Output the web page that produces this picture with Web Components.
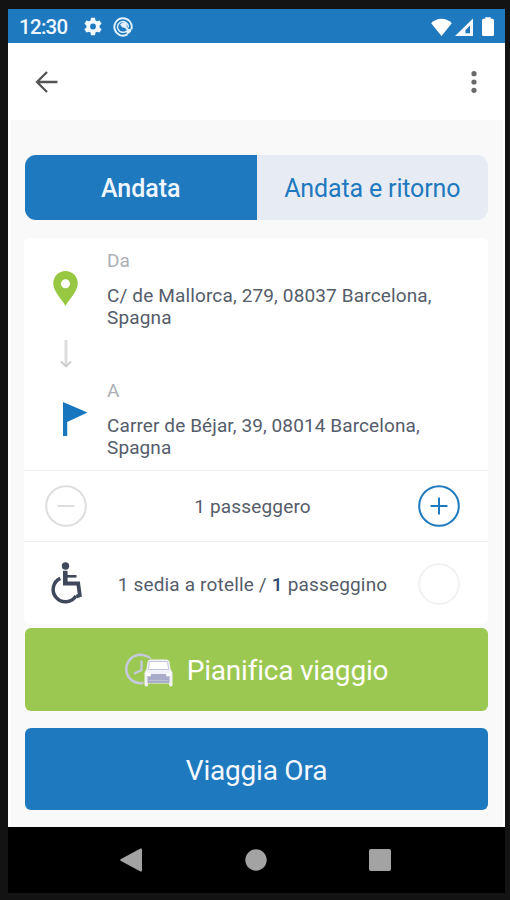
<!DOCTYPE html>
<html lang="it">
<head>
  <meta charset="UTF-8">
  <title>Pianifica viaggio</title>
  <style>
    :root {
      --blue: #1f79bf;
      --green: #9bc850;
      --text: #555c6a;
      --muted: #adafb6;
      --line: #f1f1f3;
    }

    body {
      margin: 0;
      font-family: Roboto, "Liberation Sans", sans-serif;
      color: var(--text);
    }
  </style>
</head>
<body>
  <phone-frame>
    <status-bar slot="status" time="12:30"></status-bar>
    <app-bar slot="header"></app-bar>

    <trip-tabs data-tabs='["Andata", "Andata e ritorno"]'></trip-tabs>

    <trip-card>
      <trip-stop icon="pin" label="Da">C/ de Mallorca, 279, 08037 Barcelona,<br>Spagna</trip-stop>
      <ui-icon name="down" class="arrow"></ui-icon>
      <trip-stop icon="flag" label="A" class="to">Carrer de Béjar, 39, 08014 Barcelona,<br>Spagna</trip-stop>
      <option-row class="passengers">
        <ui-icon slot="start" name="minus"></ui-icon>
        1 passeggero
        <ui-icon slot="end" name="plus"></ui-icon>
      </option-row>
      <option-row class="wheelchair">
        <ui-icon slot="start" name="wheelchair"></ui-icon>
        1 sedia a rotelle / <b>1</b> passeggino
        <ui-icon slot="end" name="circle"></ui-icon>
      </option-row>
    </trip-card>

    <action-button class="plan"><ui-icon slot="icon" name="schedule"></ui-icon>Pianifica viaggio</action-button>
    <action-button class="now">Viaggia Ora</action-button>

    <nav-bar slot="nav"></nav-bar>
  </phone-frame>

  <script>
    const ICONS = {
      gear: [20, 20, `<path fill="#f2f8ff" fill-rule="evenodd" d="M8 .8h4l.5 2.6 1.6.9 2.500-.9 2 3.400-2 1.800v1.800l2 1.800-2 3.400-2.500-.9-1.600.9-.5 2.600H8l-.5-2.600-1.600-.9-2.500.9-2-3.400 2-1.800V8.600l-2-1.800 2-3.400 2.500.9 1.600-.9zM10 6.600a2.900 2.900 0 1 0 0 5.800 2.900 2.900 0 0 0 0-5.800z"/>`],
      badge: [20, 20, `<g fill="none" stroke="#e4f2ff"><path stroke-width="1.900" d="M14.500 17.400A8.700 8.700 0 1 1 18.500 12"/><path stroke-width="1.500" d="M13.500 14A5.400 5.400 0 1 1 15.300 10.500"/><path stroke-width="2" d="M7.500 8l2.500-1 7 8"/></g><circle cx="11" cy="8" r="2.800" fill="#e4f2ff"/><path d="M12.500 14l6.500-3q-.5 4.500-4.500 6.500z" fill="#e4f2ff"/>`],
      wifi: [21, 18, `<path fill="#fff" d="M.2 5.200C5.500-.8 15.500-.8 20.800 5.200L10.500 18z"/>`],
      signal: [18, 18, `<path fill="#f4f9ff" fill-rule="evenodd" d="M0 18L18 .5V18zM15 7.500L10.500 12V15.200H15z"/>`],
      battery: [12, 19, `<path fill="#fff" d="M3.300 1.800V.3h5.400v1.500H10.500Q12 1.800 12 3.400V17.400Q12 19 10.500 19H1.500Q0 19 0 17.400V3.400Q0 1.800 1.500 1.800z"/>`],
      back: [23, 22, `<path fill="none" stroke="#555" stroke-width="2.300" d="M22.500 11H2M12 1L2 11l10 10"/>`],
      more: [6, 22, `<g fill="#6a6a6a"><circle cx="3" cy="2.700" r="2.600"/><circle cx="3" cy="11" r="2.600"/><circle cx="3" cy="19.300" r="2.600"/></g>`],
      pin: [25, 35, `<path fill="#98c841" fill-rule="evenodd" d="M12.500 0A12.200 12.200 0 0 0 .3 12.200C.3 20.500 8 27 12.500 35 17 27 24.700 20.500 24.700 12.200A12.200 12.200 0 0 0 12.500 0zM12.500 8.200a4.500 4.500 0 1 1 0 9 4.500 4.500 0 0 1 0-9z"/>`],
      down: [12, 28, `<path fill="none" stroke="#dcdcdd" stroke-width="3" d="M6 0V26"/><path fill="none" stroke="#cbcbcc" stroke-width="1.800" d="M1 21.500l5 5 5-5"/>`],
      flag: [44, 34, `<path fill="#1876bf" d="M19 0L43.500 10.500 23.200 20V34H19z"/>`],
      minus: [42, 42, `<g fill="none" stroke="#dedede" stroke-width="2"><circle cx="21" cy="21" r="19.800"/><path d="M12.500 21h17"/></g>`],
      plus: [42, 42, `<g fill="none" stroke="#1f7abe" stroke-width="2"><circle cx="21" cy="21" r="19.800"/><path d="M12.500 21h17M21 12.500v17"/></g>`],
      circle: [42, 42, `<circle cx="21" cy="21" r="19.900" fill="none" stroke="#eff0f2" stroke-width="1.800"/>`],
      wheelchair: [32, 43, `<g fill="none" stroke="#40495c"><path stroke-width="3.500" d="M10.300 16.300A12.300 12.300 0 1 0 26 33.800"/><path stroke-width="4.600" d="M15.300 8.800V21.500"/><path stroke-width="2.600" d="M16 14.300H26.500"/><path stroke-width="3.800" d="M13 21.500H28.200L29.800 33.300 26.500 34.500"/></g><circle cx="15.500" cy="4" r="3.700" fill="#40495c"/>`],
      schedule: [48, 36, `<g fill="none" stroke="#c4c9dc"><circle cx="15.500" cy="17" r="14.200" stroke-width="2.600"/><path stroke-width="2.400" d="M16.500 8.500V18L9 21.800"/></g>
        <path fill="#9bc850" d="M19.500 11L23 6.500H46V35H18.500V21z"/>
        <path fill="#f1f1fa" d="M22.500 10Q23 7.500 25.500 7.500H41.500Q44 7.500 44.500 10L45.500 17 47.500 20.500V33Q47.500 34.500 46 34.500T44 33V31.500H23V33Q23 34.500 21.500 34.500T19.500 33V20.500L21.500 17z"/>
        <path fill="#fff" stroke="#c6c7dc" stroke-width="1" d="M24.500 9.500H42.500L43.700 17.500H23.300z"/>
        <path fill="#a9acc8" d="M22.500 22H44.500V31H22.500z"/>
        <path fill="#fff" d="M21 20.500l4.500.7q1.500 3-1.200 3.200L21 23.500zM46 20.500l-4.500.7q-1.500 3 1.200 3.200L46 23.500z"/>
        <path stroke="#bdbfd4" d="M23.500 28.500H43.500"/>`],
      navBack: [22, 24, `<path fill="#a3a3a3" d="M20.500.5Q22 0 22 1.500V22.500Q22 24 20.500 23.400L1 13Q-.5 12 1 11z"/>`],
      navHome: [22, 22, `<circle cx="11" cy="11" r="10.700" fill="#a3a3a3"/>`],
      navRecent: [22, 22, `<rect width="22" height="22" rx="2" fill="#a3a3a3"/>`]
    };

    class UiIcon extends HTMLElement {
      connectedCallback() {
        const [w, h, body] = ICONS[this.getAttribute('name')];
        this.attachShadow({ mode: 'open' }).innerHTML = /*html*/ `
          <style>
            :host { display: block; flex: none; }
            svg { display: block; margin: 0 auto; }
          </style>
          <svg width="${w}" height="${h}" viewBox="0 0 ${w} ${h}">${body}</svg>
        `;
      }
    }

    class PhoneFrame extends HTMLElement {
      constructor() {
        super();
        this.attachShadow({ mode: 'open' }).innerHTML = /*html*/ `
          <style>
            :host {
              display: flex;
              flex-direction: column;
              box-sizing: border-box;
              width: 510px;
              height: 900px;
              padding: 9px 5px 7px 8px;
              background: #141313;
            }
            .screen {
              flex: 1;
              display: flex;
              flex-direction: column;
              background: #fff;
            }
            main {
              flex: 1;
              margin: 0 2px 0 3px;
              padding: 35px 15px 0 14px;
              background: #f9f9fa;
            }
          </style>
          <div class="screen">
            <slot name="status"></slot>
            <slot name="header"></slot>
            <main><slot></slot></main>
          </div>
          <slot name="nav"></slot>
        `;
      }
    }

    class StatusBar extends HTMLElement {
      connectedCallback() {
        this.attachShadow({ mode: 'open' }).innerHTML = /*html*/ `
          <style>
            :host {
              display: flex;
              align-items: center;
              box-sizing: border-box;
              height: 34px;
              padding: 1px 11px 0 11px;
              background: var(--blue);
              color: #eef6ff;
            }
            .time { width: 64px; font-size: 20.5px; font-weight: 500; letter-spacing: -.7px; }
            .left, .right { display: flex; align-items: center; }
            .left { gap: 10px; }
            .right { margin-left: auto; gap: 3px; }
            .right :last-child { margin-left: 6px; }
          </style>
          <span class="time">${this.getAttribute('time')}</span>
          <div class="left">
            <ui-icon name="gear"></ui-icon>
            <ui-icon name="badge"></ui-icon>
          </div>
          <div class="right">
            <ui-icon name="wifi"></ui-icon>
            <ui-icon name="signal"></ui-icon>
            <ui-icon name="battery"></ui-icon>
          </div>
        `;
      }
    }

    class AppBar extends HTMLElement {
      constructor() {
        super();
        this.attachShadow({ mode: 'open' }).innerHTML = /*html*/ `
          <style>
            :host {
              display: flex;
              justify-content: space-between;
              align-items: center;
              height: 77px;
              padding: 0 28px 0 27px;
              background: #fff;
            }
          </style>
          <ui-icon name="back"></ui-icon>
          <ui-icon name="more"></ui-icon>
        `;
      }
    }

    class TripTabs extends HTMLElement {
      connectedCallback() {
        const tabs = JSON.parse(this.dataset.tabs || '[]');
        this.attachShadow({ mode: 'open' }).innerHTML = /*html*/ `
          <style>
            :host {
              display: grid;
              grid-template-columns: 1fr 1fr;
              height: 65px;
              border-radius: 11px;
              overflow: hidden;
              background: #e7ecf4;
              font-size: 25px;
            }
            div {
              display: flex;
              align-items: center;
              justify-content: center;
              padding-top: 2px;
              color: var(--blue);
              letter-spacing: -.15px;
            }
            .active {
              background: var(--blue);
              color: #eef6ff;
              font-weight: 500;
              letter-spacing: 0;
            }
          </style>
          ${tabs.map((tab, i) => `<div class="${i === 0 ? 'active' : ''}">${tab}</div>`).join('')}
        `;
      }
    }

    class TripCard extends HTMLElement {
      constructor() {
        super();
        this.attachShadow({ mode: 'open' }).innerHTML = /*html*/ `
          <style>
            :host {
              display: block;
              margin: 18px 0 4px -1px;
              padding-top: 12px;
              height: 374px;
              border-radius: 6px;
              background: #fff;
            }
            ::slotted(.arrow) { width: 84px; height: 40px; padding-top: 11px; }
            ::slotted(.passengers) { margin-top: 11px; height: 70px; }
            ::slotted(.wheelchair) { height: 83px; }
          </style>
          <slot></slot>
        `;
      }
    }

    class TripStop extends HTMLElement {
      connectedCallback() {
        this.attachShadow({ mode: 'open' }).innerHTML = /*html*/ `
          <style>
            :host {
              display: grid;
              grid-template-columns: 83px 1fr;
              align-items: center;
              font-size: 19px;
              line-height: 22px;
              letter-spacing: .14px;
            }
            :host(.to) { letter-spacing: .1px; }
            ui-icon { padding-bottom: 2px; }
            .label { margin-bottom: 13px; color: var(--muted); }
            .address { white-space: nowrap; }
          </style>
          <ui-icon name="${this.getAttribute('icon')}"></ui-icon>
          <div>
            <div class="label">${this.getAttribute('label')}</div>
            <div class="address"><slot></slot></div>
          </div>
        `;
      }
    }

    class OptionRow extends HTMLElement {
      constructor() {
        super();
        this.attachShadow({ mode: 'open' }).innerHTML = /*html*/ `
          <style>
            :host {
              display: grid;
              grid-template-columns: 84px 1fr 98px;
              align-items: center;
              border-top: 1px solid var(--line);
              font-size: 19px;
              letter-spacing: .17px;
            }
            .text { text-align: center; white-space: nowrap; padding: 1px 0 0 7px; }
            ::slotted(b) { font-weight: 500; color: #2c4a70; }
          </style>
          <slot name="start"></slot>
          <div class="text"><slot></slot></div>
          <slot name="end"></slot>
        `;
      }
    }

    class ActionButton extends HTMLElement {
      constructor() {
        super();
        this.attachShadow({ mode: 'open' }).innerHTML = /*html*/ `
          <style>
            :host {
              display: flex;
              align-items: center;
              justify-content: center;
              gap: 14px;
              height: 82px;
              border-radius: 6px;
              background: var(--blue);
              color: #f3f8ff;
              font-size: 28px;
              letter-spacing: -.22px;
            }
            :host(.plan) {
              height: 83px;
              margin-bottom: 17px;
              background: var(--green);
              color: #fff;
            }
            span { padding-top: 2px; }
          </style>
          <slot name="icon"></slot>
          <span><slot></slot></span>
        `;
      }
    }

    class NavBar extends HTMLElement {
      constructor() {
        super();
        this.attachShadow({ mode: 'open' }).innerHTML = /*html*/ `
          <style>
            :host {
              display: flex;
              justify-content: space-between;
              align-items: center;
              height: 66px;
              padding: 0 114px 0 112px;
              background: #000;
            }
          </style>
          <ui-icon name="navBack"></ui-icon>
          <ui-icon name="navHome"></ui-icon>
          <ui-icon name="navRecent"></ui-icon>
        `;
      }
    }

    customElements.define('ui-icon', UiIcon);
    customElements.define('phone-frame', PhoneFrame);
    customElements.define('status-bar', StatusBar);
    customElements.define('app-bar', AppBar);
    customElements.define('trip-tabs', TripTabs);
    customElements.define('trip-card', TripCard);
    customElements.define('trip-stop', TripStop);
    customElements.define('option-row', OptionRow);
    customElements.define('action-button', ActionButton);
    customElements.define('nav-bar', NavBar);
  </script>
</body>
</html>
